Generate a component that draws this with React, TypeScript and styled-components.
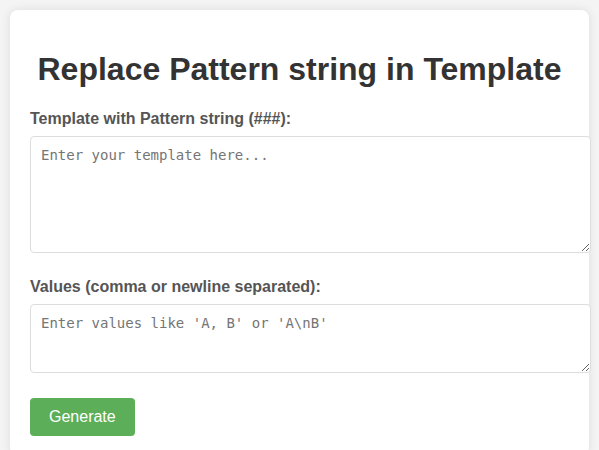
import React from "react";
import styled, { createGlobalStyle } from "styled-components";

const GlobalStyle = createGlobalStyle`
  body {
    margin: 0;
    padding: 10px;
    background: #f4f4f4;
    font-family: "Liberation Sans", Arial, Helvetica, sans-serif;
  }
`;

const Card = styled.div`
  background: #ffffff;
  padding: 20px;
  border-radius: 8px;
  box-shadow: 0 0 10px rgba(0, 0, 0, 0.1);
`;

const Title = styled.h1`
  margin: 21px 0 22px;
  font-size: 32px;
  font-weight: bold;
  text-align: center;
  color: #333333;
`;

const Label = styled.label`
  display: block;
  margin-bottom: 8px;
  font-size: 16px;
  font-weight: bold;
  color: #555555;
`;

const TextArea = styled.textarea<{ $h: number; $mb: number }>`
  display: block;
  width: 100%;
  height: ${(p) => p.$h}px;
  margin: 0 0 ${(p) => p.$mb}px;
  padding: 10px;
  border: 1px solid #dddddd;
  border-radius: 4px;
  font-family: "DejaVu Sans Mono", "Liberation Mono", monospace;
  font-size: 14px;
  color: #333333;
  background: #ffffff;
  &::placeholder {
    color: #757575;
  }
`;

const Button = styled.button`
  display: block;
  padding: 10px 19px;
  border: none;
  border-radius: 4px;
  background: #5cae59;
  color: #ffffff;
  font-family: "Liberation Sans", Arial, Helvetica, sans-serif;
  font-size: 16px;
  line-height: 18px;
  height: 38px;
  cursor: pointer;
`;

export default function App() {
  return (
    <>
      <GlobalStyle />
      <Card>
        <Title>Replace Pattern string in Template</Title>
        <Label htmlFor="tpl">Template with Pattern string (###):</Label>
        <TextArea id="tpl" $h={95} $mb={25} placeholder="Enter your template here..." />
        <Label htmlFor="vals">Values (comma or newline separated):</Label>
        <TextArea id="vals" $h={47} $mb={25} placeholder="Enter values like 'A, B' or 'A\nB'" />
        <Button>Generate</Button>
      </Card>
    </>
  );
}
